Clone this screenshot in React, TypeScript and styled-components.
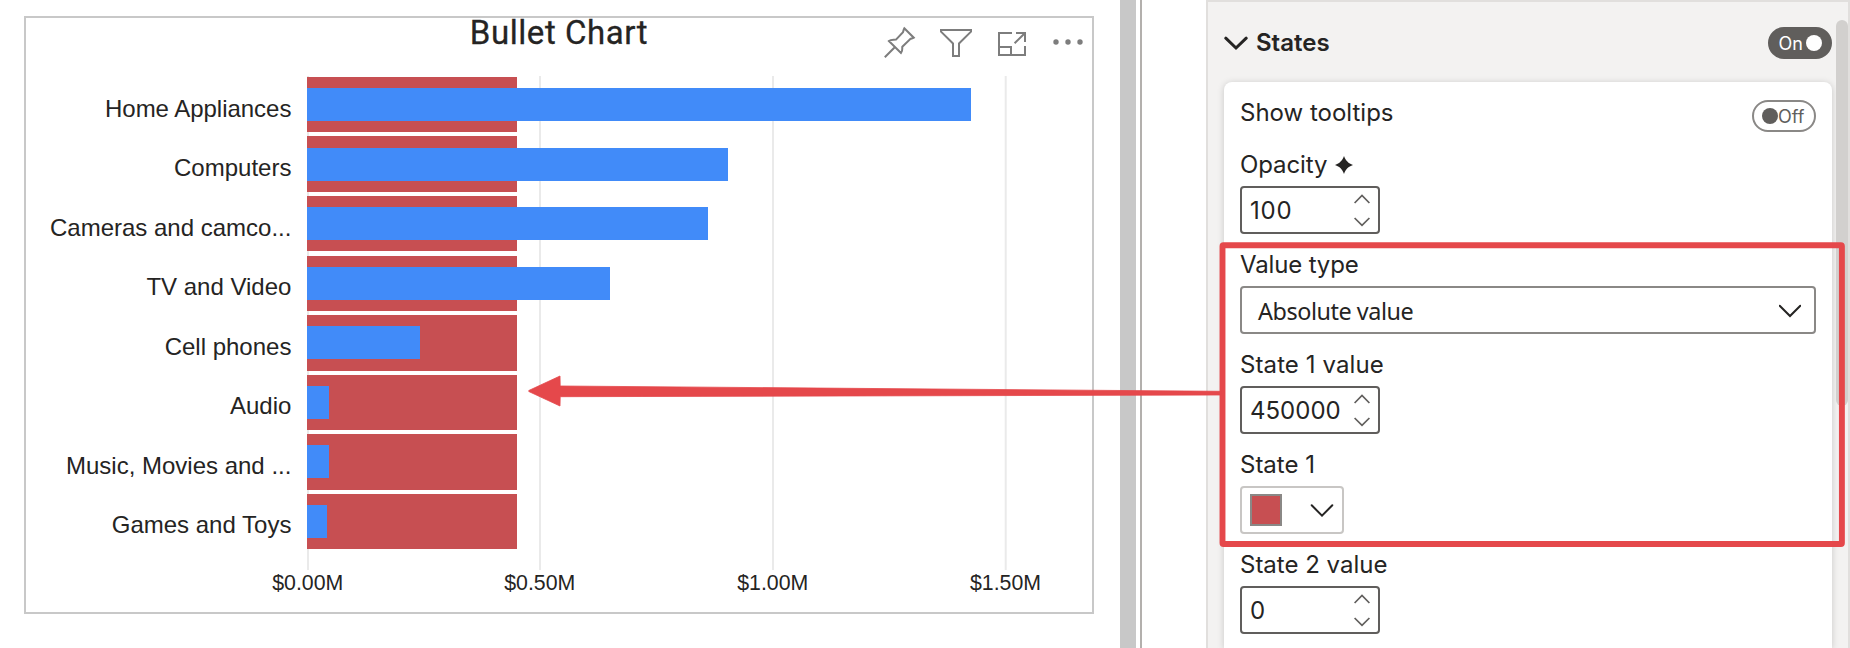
import React from "react";
import styled, { createGlobalStyle } from "styled-components";

const GlobalStyle = createGlobalStyle`
  * { box-sizing: border-box; }
  body { margin: 0; background: #fff; color: #252423; overflow: hidden; }
`;

const Page = styled.main`
  position: relative;
  display: flex;
  width: 1850px;
  height: 648px;
  overflow: hidden;
  background: #fff;
`;

const ReportCanvas = styled.section`
  flex: 0 0 1120px;
  padding: 16px 26px 34px 24px;
`;

const VisualCard = styled.article`
  display: flex;
  flex-direction: column;
  height: 598px;
  border: 2px solid #c8c8c8;
`;

const VisualHeader = styled.header`
  display: grid;
  grid-template-columns: 1fr auto 1fr;
  height: 52px;
`;

const VisualTitle = styled.h1`
  grid-column: 2;
  margin: 0;
  font: 400 33px/29px Roboto, sans-serif;
  letter-spacing: 0.55px;
  -webkit-text-stroke: 0.3px #252423;
  white-space: nowrap;
`;

const VisualActions = styled.div`
  display: flex;
  justify-content: flex-end;
  gap: 24px;
  padding: 8px 8px 0 0;
`;

const ActionIcon = styled.svg`
  width: 32px;
  height: 32px;
  fill: none;
  stroke: #7d7d7d;
  stroke-width: 2;
  overflow: visible;
`;

const ChartSvg = styled.svg`
  display: block;
  width: 1066px;
  height: 542px;
`;

const CategoryText = styled.text`
  font: 24px "Liberation Sans", Arial, sans-serif;
  fill: #252423;
  text-anchor: end;
`;

const AxisText = styled.text`
  font: 21.3px "Liberation Sans", Arial, sans-serif;
  fill: #252423;
  text-anchor: middle;
`;

const Splitter = styled.div`
  flex: 0 0 86px;
  border-left: 16px solid #c8c8c8;
  padding-left: 4px;
`;

const SplitterLine = styled.div`
  width: 2px;
  height: 100%;
  background: #b3b0ad;
`;

const FormatPane = styled.aside`
  display: flex;
  flex: 1;
  height: 648px;
  border: 2px solid #e1dfdd;
  border-bottom: 0;
  background: #f3f2f1;
  font-family: Inter, "Segoe UI", sans-serif;
  font-size: 24px;
`;

const PaneBody = styled.div`
  flex: 1;
  display: flex;
  flex-direction: column;
  padding: 0 4px 0 16px;
`;

const ScrollThumb = styled.div`
  flex: 0 0 12px;
  height: 386px;
  margin-top: 18px;
  border-radius: 6px;
  background: #d2d0ce;
`;

const SectionHeader = styled.header`
  display: flex;
  align-items: flex-start;
  gap: 8px;
  height: 80px;
  padding-top: 25px;
`;

const SectionTitle = styled.h2`
  flex: 1;
  margin: 0;
  font-size: 24px;
  font-weight: 600;
  line-height: 32px;
`;

const SettingsCard = styled.div`
  display: flex;
  flex-direction: column;
  gap: 16px;
  flex: 1;
  padding: 16px 16px 0;
  border-radius: 8px 8px 0 0;
  background: #fff;
  box-shadow: 0 1px 7px rgba(0, 0, 0, 0.18);
`;

const ToggleRow = styled.div`
  display: flex;
  justify-content: space-between;
  height: 36px;
`;

const Toggle = styled.button<{ $on?: boolean; $drop?: number }>`
  display: flex;
  flex-direction: ${(p) => (p.$on ? "row" : "row-reverse")};
  align-items: center;
  justify-content: flex-end;
  gap: ${(p) => (p.$on ? "3px" : "0")};
  width: 64px;
  height: 32px;
  margin: ${(p) => p.$drop ?? 0}px 0 0;
  padding: 0 8px;
  border: 2px solid ${(p) => (p.$on ? "#605e5c" : "#8a8886")};
  border-radius: 16px;
  background: ${(p) => (p.$on ? "#605e5c" : "#fff")};
  color: ${(p) => (p.$on ? "#fff" : "#605e5c")};
  font: 18px/22px Inter, sans-serif;
`;

const ToggleText = styled.span`
  padding-top: 2px;
`;

const Knob = styled.span<{ $on?: boolean }>`
  flex: 0 0 16px;
  height: 16px;
  border-radius: 50%;
  background: ${(p) => (p.$on ? "#fff" : "#605e5c")};
`;

const Field = styled.div`
  display: flex;
  flex-direction: column;
  gap: 6px;
`;

const Label = styled.label<{ $spacing?: number }>`
  display: flex;
  align-items: center;
  gap: 8px;
  height: 30px;
  line-height: 30px;
  letter-spacing: ${(p) => p.$spacing ?? 0}px;
  white-space: nowrap;
`;

const NumberBox = styled.div`
  display: flex;
  align-items: center;
  justify-content: space-between;
  width: 140px;
  height: 48px;
  padding: 0 8px;
  border: 2px solid #605e5c;
  border-radius: 4px;
  background: #fff;
`;

const NumberValue = styled.span<{ $spacing?: number }>`
  padding-top: 2px;
  line-height: 30px;
  letter-spacing: ${(p) => p.$spacing ?? 0}px;
`;

const SelectBox = styled.div`
  display: flex;
  align-items: center;
  justify-content: space-between;
  height: 48px;
  padding: 2px 13px 0 16px;
  border: 2px solid #8a8886;
  border-radius: 4px;
  font: 23.4px/32px "Noto Sans", sans-serif;
  letter-spacing: -0.45px;
`;

const ColorPicker = styled.div`
  display: flex;
  align-items: center;
  justify-content: space-between;
  width: 104px;
  height: 48px;
  padding: 0 8px;
  border: 2px solid #c8c6c4;
  border-radius: 4px;
`;

const Swatch = styled.span`
  width: 32px;
  height: 32px;
  border: 2px solid #8a8886;
  background: #c74f52;
`;

const Glyph = styled.svg<{ $stroke?: number }>`
  flex: none;
  fill: none;
  stroke: #252423;
  stroke-width: ${(p) => p.$stroke ?? 2};
  stroke-linecap: round;
`;

const Spin = styled.svg`
  flex: none;
  fill: none;
  stroke: #605e5c;
  stroke-width: 1.7;
`;

const Annotation = styled.svg`
  position: absolute;
  inset: 0;
  pointer-events: none;
`;

const categories = [
  { name: "Home Appliances", base: 117, top: 77, bottom: 132, bar: 88, end: 971, width: 186.4 },
  { name: "Computers", base: 176, top: 136, bottom: 192, bar: 148, end: 728 },
  { name: "Cameras and camco...", base: 236, top: 196, bottom: 251, bar: 207, end: 708 },
  { name: "TV and Video", base: 295, top: 256, bottom: 311, bar: 267, end: 610 },
  { name: "Cell phones", base: 355, top: 315, bottom: 371, bar: 326, end: 420 },
  { name: "Audio", base: 414, top: 375, bottom: 430, bar: 386, end: 329 },
  { name: "Music, Movies and ...", base: 474, top: 434, bottom: 490, bar: 445, end: 329 },
  { name: "Games and Toys", base: 533, top: 494, bottom: 549, bar: 505, end: 327 },
];

const ticks = [
  { label: "$0.00M", x: 308 },
  { label: "$0.50M", x: 540 },
  { label: "$1.00M", x: 773 },
  { label: "$1.50M", x: 1005.7 },
];

function BulletChart() {
  return (
    <ChartSvg viewBox="26 70 1066 542">
      {ticks.map((t) => (
        <React.Fragment key={t.label}>
          <rect x={t.x - 1} y={76} width={2} height={494} fill="#eaeaea" />
          <AxisText x={t.x - 0.2} y={590}>{t.label}</AxisText>
        </React.Fragment>
      ))}
      {categories.map((c) => (
        <React.Fragment key={c.name}>
          <CategoryText x={291.4} y={c.base} textLength={c.width}>
            {c.name}
          </CategoryText>
          <rect x={307} y={c.top} width={210} height={c.bottom - c.top} fill="#c74f52" />
          <rect x={307} y={c.bar} width={c.end - 307} height={33} fill="#418bf9" />
        </React.Fragment>
      ))}
    </ChartSvg>
  );
}

function NumberField({ label, value, spacing, digitSpacing, children }: {
  label: string; value: string; spacing?: number; digitSpacing?: number; children?: React.ReactNode;
}) {
  return (
    <Field>
      <Label $spacing={spacing}>{label}{children}</Label>
      <NumberBox>
        <NumberValue $spacing={digitSpacing}>{value}</NumberValue>
        <Spin width="16" height="34" viewBox="0 0 16 34">
          <path d="M.6 10 8 2.4 15.4 10M.6 25 8 32.4 15.4 25" />
        </Spin>
      </NumberBox>
    </Field>
  );
}

export default function App() {
  return (
    <Page>
      <GlobalStyle />
      <ReportCanvas>
        <VisualCard>
          <VisualHeader>
            <VisualTitle>Bullet Chart</VisualTitle>
            <VisualActions>
              <ActionIcon viewBox="884 26 32 32">
                <path d="M884.8 57.3 895 47M904.3 28.2 913.8 37.7 C912.5 38.7 911.5 38.4 910 39.2 L902.3 46.8 C902 49 903 50.5 901 53 L888.9 41 C891 39.2 893 39.9 896 39.6 L903 32.2 C903.6 30.7 903.4 29.5 904.3 28.2Z" />
              </ActionIcon>
              <ActionIcon viewBox="940 26 32 32">
                <path d="M941 30h30v1.6L959 43.5V56h-6V43.5L941 31.6Z" />
              </ActionIcon>
              <ActionIcon viewBox="996 26 32 32">
                <path d="M1012 33h-13v22h26v-9M999 47h12v8M1016 33h9v9M1014.6 43.2 1025 33" />
              </ActionIcon>
              <ActionIcon viewBox="1052 26 32 32">
                <g fill="#7d7d7d" stroke="none">
                  <circle cx="1056" cy="42" r="2.7" />
                  <circle cx="1068" cy="42" r="2.7" />
                  <circle cx="1080" cy="42" r="2.7" />
                </g>
              </ActionIcon>
            </VisualActions>
          </VisualHeader>
          <BulletChart />
        </VisualCard>
      </ReportCanvas>
      <Splitter><SplitterLine /></Splitter>
      <FormatPane>
        <PaneBody>
          <SectionHeader>
            <Glyph $stroke={3} width="24" height="32" viewBox="0 0 24 32">
              <path d="M1.8 11.2 12 21 22.2 11.2" />
            </Glyph>
            <SectionTitle>States</SectionTitle>
            <Toggle $on><ToggleText>On</ToggleText><Knob $on /></Toggle>
          </SectionHeader>
          <SettingsCard>
            <ToggleRow>
              <Label>Show tooltips</Label>
              <Toggle $drop={2}><ToggleText>Off</ToggleText><Knob /></Toggle>
            </ToggleRow>
            <NumberField label="Opacity" value="100" spacing={-0.1} digitSpacing={0.8}>
              <svg width="18" height="18" viewBox="0 0 18 18">
                <path d="M9 0C10.8 4.8 13.2 7.2 18 9 13.2 10.8 10.8 13.2 9 18 7.2 13.2 4.8 10.8 0 9 4.8 7.2 7.2 4.8 9 0Z" fill="#252423" />
              </svg>
            </NumberField>
            <Field>
              <Label $spacing={-0.15}>Value type</Label>
              <SelectBox>
                Absolute value
                <Glyph width="22" height="14" viewBox="0 0 22 14">
                  <path d="M.7 1.7 11 12 21.3 1.7" />
                </Glyph>
              </SelectBox>
            </Field>
            <NumberField label="State 1 value" value="450000" spacing={0.1} />
            <Field>
              <Label>State 1</Label>
              <ColorPicker>
                <Swatch />
                <Glyph width="24" height="14" viewBox="0 0 24 14">
                  <path d="M1.7 2.3 12 12.6 22.3 2.3" />
                </Glyph>
              </ColorPicker>
            </Field>
            <NumberField label="State 2 value" value="0" />
          </SettingsCard>
        </PaneBody>
        <ScrollThumb />
      </FormatPane>
      <Annotation width="1850" height="648" viewBox="0 0 1850 648">
        <rect x="1222.5" y="245.2" width="619.4" height="298.8" rx="1" fill="none" stroke="#e5484b" strokeWidth="5.9" />
        <path
          d="M528.8 390.5 560 376 560.2 386 1221 391.3V395L560.2 396.7 560 406 528.8 391.5Z"
          fill="#e5484b"
          stroke="#e5484b"
          strokeWidth="0.8"
          strokeLinejoin="round"
        />
      </Annotation>
    </Page>
  );
}
